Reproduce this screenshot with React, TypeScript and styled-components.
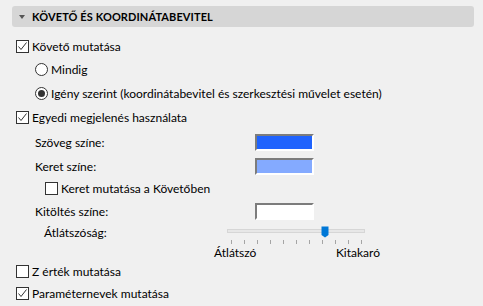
// Dependencies
import React from "react";
import styled, { createGlobalStyle } from "styled-components";

const GlobalStyle = createGlobalStyle`
  html, body {
    margin: 0;
    padding: 0;
    background: #f0f0f0;
  }
  body {
    font-family: Lato, "Liberation Sans", sans-serif;
    font-size: 12px;
    color: #000;
  }
`;

// Layout
const Page = styled.div`
  width: 483px;
  height: 306px;
  padding: 6px 9px 0 12px;
  box-sizing: border-box;
  overflow: hidden;
`;

const Header = styled.div`
  height: 21px;
  display: flex;
  align-items: center;
  gap: 7px;
  padding-left: 7px;
  background: #d6d6d6;
  border-radius: 3px;
  font-weight: 700;
  font-size: 11px;
  letter-spacing: 0.1px;
`;

const Caret = styled.span`
  width: 0;
  height: 0;
  border-left: 3.5px solid transparent;
  border-right: 3.5px solid transparent;
  border-top: 4px solid #555;
`;

const List = styled.div`
  display: flex;
  flex-direction: column;
  padding-top: 8px;
`;

const Row = styled.div<{ $h: number; $indent?: number }>`
  height: ${(p) => p.$h}px;
  display: flex;
  align-items: center;
  padding-left: ${(p) => p.$indent ?? 4}px;
  white-space: nowrap;
`;

const Label = styled.span`
  flex: 1;
`;

// Controls
const Box = styled.span`
  width: 13px;
  height: 13px;
  box-sizing: border-box;
  border: 1px solid #333;
  background: #fff;
  margin-right: 3px;
  display: inline-flex;
  flex-shrink: 0;
`;

const Radio = styled.span<{ $on?: boolean }>`
  width: 13px;
  height: 13px;
  box-sizing: border-box;
  border: 1px solid #333;
  border-radius: 50%;
  background: #fff;
  margin-right: 3px;
  display: inline-flex;
  align-items: center;
  justify-content: center;
  flex-shrink: 0;
  &::after {
    content: "";
    width: 7px;
    height: 7px;
    border-radius: 50%;
    background: ${(p) => (p.$on ? "#333" : "transparent")};
  }
`;

const Swatch = styled.span<{ $color: string }>`
  width: 59px;
  height: 17px;
  box-sizing: border-box;
  border: 2px solid;
  border-color: #7c7c7c #fff #fff #7c7c7c;
  background: ${(p) => p.$color};
  margin-right: 160px;
`;

const Check = ({ on }: { on?: boolean }) => (
  <Box>
    {on && (
      <svg width="11" height="11" viewBox="0 0 11 11">
        <polyline points="1.5,5.5 4,8.5 9.5,1.5" fill="none" stroke="#333" strokeWidth="1" />
      </svg>
    )}
  </Box>
);

// Slider
const SliderBlock = styled.div`
  height: 39px;
  display: flex;
  flex-direction: column;
`;

const SliderTop = styled.div`
  height: 22px;
  display: flex;
  align-items: flex-start;
  padding-left: 32px;
`;

const SliderLabel = styled.span`
  width: 183px;
  line-height: 22px;
`;

const SliderArea = styled.div`
  position: relative;
  width: 138px;
  margin-top: 7px;
`;

const Track = styled.div`
  height: 4px;
  box-sizing: border-box;
  background: #e7e7e7;
  border: 1px solid #d6d6d6;
`;

const Thumb = styled.svg`
  position: absolute;
  top: -3px;
  left: 94px;
`;

const Ticks = styled.div`
  display: flex;
  justify-content: space-between;
  width: 131px;
  margin: 7px 0 0 4px;
`;

const Tick = styled.span`
  width: 1px;
  height: 4px;
  background: #a5a5a5;
`;

const RangeLabels = styled.div`
  display: flex;
  justify-content: space-between;
  width: 166px;
  margin-left: 202px;
  margin-top: 1px;
`;

const ticks = Array.from({ length: 11 });

const App = () => {
  return (
    <>
      <GlobalStyle />
      <Page>
        <Header>
          <Caret />
          KÖVETŐ ÉS KOORDINÁTABEVITEL
        </Header>
        <List>
          <Row $h={23}>
            <Check on />
            Követő mutatása
          </Row>
          <Row $h={23} $indent={23}>
            <Radio />
            Mindig
          </Row>
          <Row $h={24} $indent={23}>
            <Radio $on />
            Igény szerint (koordinátabevitel és szerkesztési művelet esetén)
          </Row>
          <Row $h={25}>
            <Check on />
            Egyedi megjelenés használata
          </Row>
          <Row $h={25} $indent={23}>
            <Label>Szöveg színe:</Label>
            <Swatch $color="#1f63fd" />
          </Row>
          <Row $h={22} $indent={23}>
            <Label>Keret színe:</Label>
            <Swatch $color="#84aaff" />
          </Row>
          <Row $h={23} $indent={33}>
            <Check />
            Keret mutatása a Követőben
          </Row>
          <Row $h={22} $indent={23}>
            <Label>Kitöltés színe:</Label>
            <Swatch $color="#fff" />
          </Row>
          <SliderBlock>
            <SliderTop>
              <SliderLabel>Átlátszóság:</SliderLabel>
              <SliderArea>
                <Track />
                <Thumb width="8" height="12" viewBox="0 0 8 12">
                  <path d="M0.5 0.5 H7.5 V9 L4 11.5 L0.5 9 Z" fill="#0078d7" />
                </Thumb>
                <Ticks>
                  {ticks.map((_, i) => (
                    <Tick key={i} />
                  ))}
                </Ticks>
              </SliderArea>
            </SliderTop>
            <RangeLabels>
              <span>Átlátszó</span>
              <span>Kitakaró</span>
            </RangeLabels>
          </SliderBlock>
          <Row $h={21}>
            <Check />
            Z érték mutatása
          </Row>
          <Row $h={22}>
            <Check on />
            Paraméternevek mutatása
          </Row>
        </List>
      </Page>
    </>
  );
};

export default App;
